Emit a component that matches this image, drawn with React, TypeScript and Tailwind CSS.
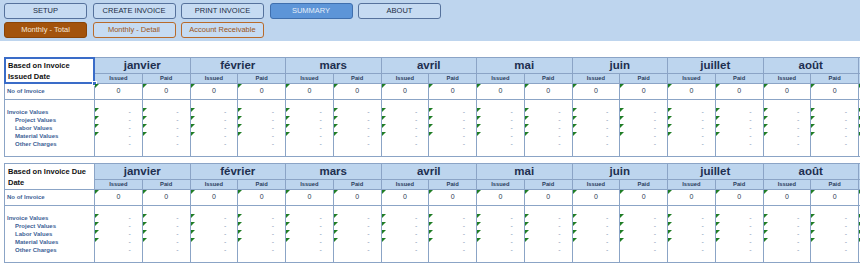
import React from 'react';

const months = ['janvier', 'février', 'mars', 'avril', 'mai', 'juin', 'juillet', 'août', ''];
const lines = [
  { label: 'Invoice Values', indent: false, flag: true },
  { label: 'Project Values', indent: true, flag: true },
  { label: 'Labor Values', indent: true, flag: true },
  { label: 'Material Values', indent: true, flag: true },
  { label: 'Other Charges', indent: true, flag: false },
];

const Flag = () => (
  <span className="absolute left-0 top-0 w-0 h-0 border-t-[4px] border-t-[#1f7d25] border-r-[4px] border-r-transparent" />
);

const NavButton = ({ label, active }: { label: string; active?: boolean }) => (
  <button
    className={
      active
        ? 'w-[83px] h-[16px] rounded-[3px] border border-[#3f6fae] bg-[#5d95d8] text-[7.5px] text-[#e4edf9]'
        : 'w-[83px] h-[16px] rounded-[3px] border border-[#56729c] bg-[#c6dbf2] text-[7.5px] text-[#1d2b44]'
    }
  >
    {label}
  </button>
);

const SubButton = ({ label, active }: { label: string; active?: boolean }) => (
  <button
    className={
      active
        ? 'w-[83px] h-[16px] rounded-[3px] border border-[#8a4406] bg-[#a3530c] text-[7.5px] text-[#f5e8da]'
        : 'w-[83px] h-[16px] rounded-[3px] border border-[#b86a2a] bg-[#c6dbf2] text-[7.5px] text-[#9c5520]'
    }
  >
    {label}
  </button>
);

const SummaryTable = ({ title, selected }: { title: string; selected?: boolean }) => {
  // last pair of columns is the next month, cut off by the window edge
  const cells = months.flatMap((m, i) => [{ key: i + 'i', show: m !== '' }, { key: i + 'p', show: m !== '' }]);
  return (
    <div className="w-[856px] overflow-hidden">
      <div className="grid w-max grid-cols-[89px_repeat(18,46.75px)] grid-rows-[15px_9px_15px_56px] gap-px p-px bg-[#8ba4c6]">
        <div className="relative row-span-2 bg-white px-[3px] pt-[3px] text-[7.5px] leading-[10.5px] font-bold text-[#111]">
          {title}
          {selected && (
            <>
              <span className="absolute -inset-px border-2 border-[#3a6cc8]" />
              <span className="absolute -right-[3px] -bottom-[3px] w-[5px] h-[5px] bg-[#3a6cc8] border border-white" />
            </>
          )}
        </div>
        {months.map((m, i) => (
          <div key={i} className="col-span-2 bg-[#bdd5ee] flex items-center justify-center text-[11.5px] font-bold text-[#1e2f50] leading-none">
            {m}
          </div>
        ))}
        {months.map((m, i) => (
          <React.Fragment key={i + 'sub'}>
            <div className="bg-[#bdd5ee] flex items-center justify-center text-[5.75px] font-bold text-[#2a3c5c]">{m && 'Issued'}</div>
            <div className="bg-[#bdd5ee] flex items-center justify-center text-[5.75px] font-bold text-[#2a3c5c]">{m && 'Paid'}</div>
          </React.Fragment>
        ))}

        <div className="bg-white flex items-center pl-[2px] text-[6px] font-bold text-[#3e5f96]">No of Invoice</div>
        {cells.map(c => (
          <div key={c.key} className="relative bg-white flex items-center justify-center text-[7px] text-[#2c3a52]">
            <Flag />
            {c.show && '0'}
          </div>
        ))}

        <div className="bg-white pt-[8px] pl-[2px]">
          {lines.map(l => (
            <div key={l.label} className={'h-[8px] leading-[8px] text-[6px] font-bold text-[#3e5f96] ' + (l.indent ? 'pl-[8px]' : '')}>
              {l.label}
            </div>
          ))}
        </div>
        {cells.map(c => (
          <div key={c.key} className="bg-white pt-[8px]">
            {lines.map(l => (
              <div key={l.label} className="relative h-[8px] leading-[8px] text-right pr-[11px] text-[7px] text-[#8a9cb8]">
                {l.flag && <Flag />}
                {c.show && '-'}
              </div>
            ))}
          </div>
        ))}
      </div>
    </div>
  );
};

export default function App() {
  return (
    <div className="w-[860px] h-[274px] bg-white overflow-hidden font-['Liberation_Sans',Arial,sans-serif]">
      <div className="h-[41px] bg-[#bed5ee] pt-[3px] pl-[4px] flex flex-col gap-[3px]">
        <div className="flex gap-[5.5px]">
          <NavButton label="SETUP" />
          <NavButton label="CREATE INVOICE" />
          <NavButton label="PRINT INVOICE" />
          <NavButton label="SUMMARY" active />
          <NavButton label="ABOUT" />
        </div>
        <div className="flex gap-[5.5px]">
          <SubButton label="Monthly - Total" active />
          <SubButton label="Monthly - Detail" />
          <SubButton label="Account Receivable" />
        </div>
      </div>
      <div className="pl-[4px] pt-[16px] flex flex-col gap-[6px]">
        <SummaryTable title="Based on Invoice Issued Date" selected />
        <SummaryTable title="Based on Invoice Due Date" />
      </div>
    </div>
  );
}
